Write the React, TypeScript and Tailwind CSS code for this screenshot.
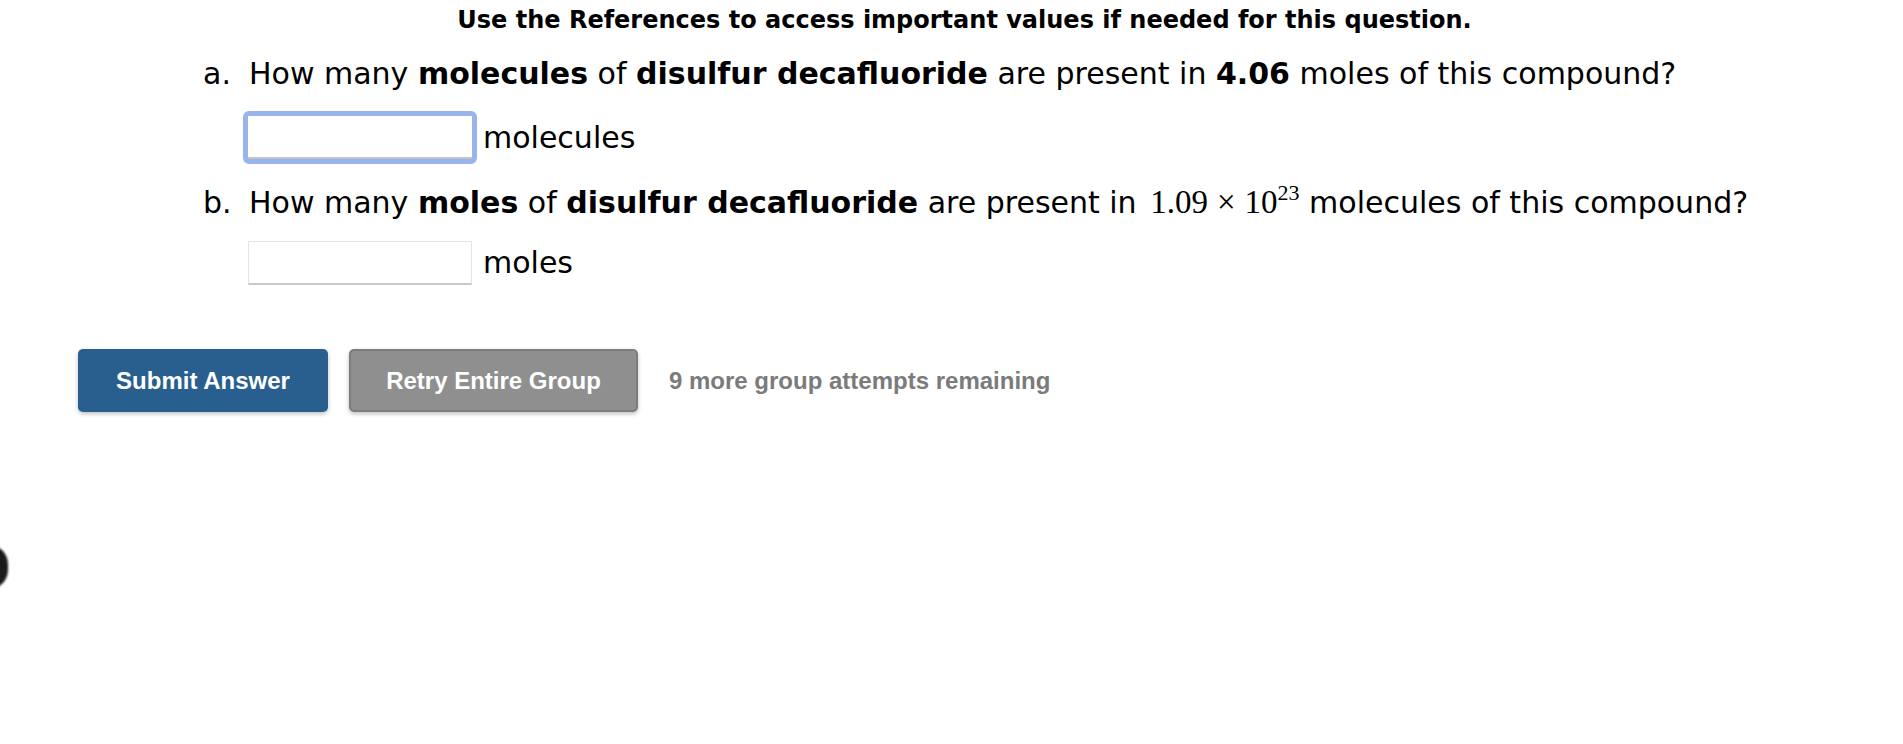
import React from 'react';

const qFont = { fontFamily: '"DejaVu Sans", Verdana, sans-serif' };

function MathValue() {
  return (
    <span className="ml-[4px] whitespace-nowrap text-[33px]" style={{ fontFamily: '"Liberation Serif", "DejaVu Serif", serif' }}>
      1.09<span className="mx-[9px]">×</span>10
      <sup className="relative -top-[13px] text-[22px] leading-none">23</sup>
    </span>
  );
}

function App() {
  return (
    <div className="relative h-[744px] w-full overflow-hidden bg-white text-black">
      <div className="flex justify-center pl-[26px] pt-[6px]">
        <p className="text-[24px] font-bold leading-[28px]" style={qFont}>
          Use the References to access important values if needed for this question.
        </p>
      </div>

      <ol className="mt-[22px] flex flex-col pl-[203px] text-[30px]" style={qFont}>
        <li className="flex flex-col">
          <div className="flex leading-[36px]">
            <span className="w-[46px]">a.</span>
            <span>
              How many <b>molecules</b> of <b>disulfur decafluoride</b> are present in <b>4.06</b> moles of this
              compound?
            </span>
          </div>
          <div className="mt-[19px] flex items-center pl-[40px]">
            <div className="rounded-[6px] border-[5px] border-[#98b4ef]">
              <input className="block h-[43px] w-[224px] border-b-2 border-[#c4c4c4] bg-white outline-none" />
            </div>
            <span className="ml-[6px] leading-[36px]">molecules</span>
          </div>
        </li>

        <li className="mt-[20px] flex flex-col">
          <div className="flex h-[36px] items-baseline leading-[36px]">
            <span className="w-[46px]">b.</span>
            <span>
              How many <b>moles</b> of <b>disulfur decafluoride</b> are present in <MathValue /> molecules of this
              compound?
            </span>
          </div>
          <div className="mt-[21px] flex items-center pl-[45px]">
            <input className="block h-[44px] w-[224px] border border-b-2 border-[#e4e4e4] border-b-[#c8c8c8] bg-white outline-none" />
            <span className="ml-[11px] leading-[36px]">moles</span>
          </div>
        </li>
      </ol>

      <div className="mt-[64px] flex items-center pl-[78px]" style={{ fontFamily: '"Liberation Sans", Arial, sans-serif' }}>
        <button className="h-[63px] w-[250px] rounded-[5px] bg-[#295f8f] text-[24px] font-bold text-white shadow-[0_2px_4px_rgba(0,0,0,0.25)]">
          Submit Answer
        </button>
        <button className="ml-[21px] h-[63px] w-[289px] rounded-[5px] border-2 border-[#7c7c7c] bg-[#8f8f8f] text-[24px] font-bold text-white shadow-[0_2px_4px_rgba(0,0,0,0.25)]">
          Retry Entire Group
        </button>
        <span className="ml-[31px] text-[24px] font-bold text-[#7b7b7b]">9 more group attempts remaining</span>
      </div>

      <div className="absolute left-[-30px] top-[545px] h-[44px] w-[38px] rounded-full bg-[#1a1a1a] blur-[1px]" />
    </div>
  );
}

export default App;
